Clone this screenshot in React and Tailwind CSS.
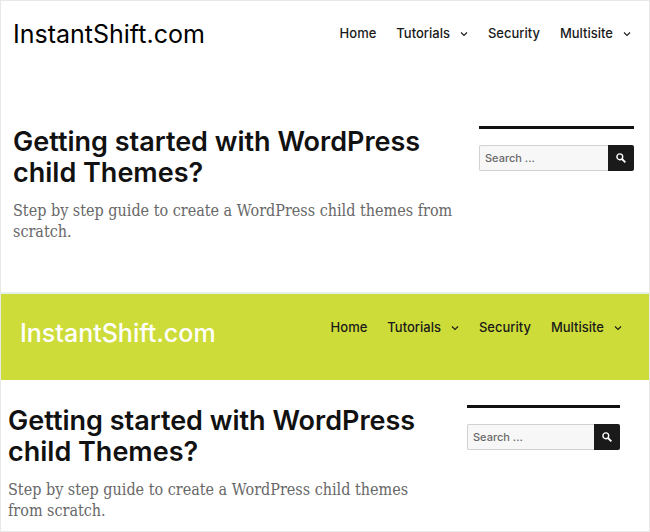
const navItems = [
    { label: 'Home' },
    { label: 'Tutorials', hasMenu: true },
    { label: 'Security' },
    { label: 'Multisite', hasMenu: true },
];

function ChevronIcon() {
    return (
        <svg className="w-[8px] h-[6px] ml-2.5 mt-px" viewBox="0 0 8 6" fill="none" stroke="currentColor" strokeWidth="1.1" aria-hidden="true">
            <path d="M1 1.5 4 4.5 7 1.5" />
        </svg>
    );
}

function SearchIcon() {
    return (
        <svg className="w-[10px] h-[10px]" viewBox="0 0 10 10" fill="none" stroke="currentColor" aria-hidden="true">
            <circle cx="3.8" cy="3.8" r="2.9" strokeWidth="1.4" />
            <path d="M6 6 9.4 9.4" strokeWidth="1.8" />
        </svg>
    );
}

function MainNav() {
    return (
        <nav>
            <ul className="flex gap-5 text-[13px] leading-4 font-medium text-[#1a1a1a]">
                {navItems.map((item) => (
                    <li key={item.label}>
                        <a href="#" className="flex items-center">
                            {item.label}
                            {item.hasMenu && <ChevronIcon />}
                        </a>
                    </li>
                ))}
            </ul>
        </nav>
    );
}

function SearchForm() {
    return (
        <form role="search" onSubmit={(e) => e.preventDefault()} className="flex h-[26px] mt-4">
            <input
                type="text"
                aria-label="Search"
                placeholder="Search ..."
                className="flex-1 min-w-0 px-[5px] text-[11px] leading-4 font-medium bg-[#f7f7f7] border border-r-0 border-[#d1d1d1] rounded-l-xs placeholder:text-[#686868]"
            />
            <button type="submit" aria-label="Search" className="w-[26px] flex items-center justify-center bg-[#1a1a1a] text-white rounded-r-xs">
                <SearchIcon />
            </button>
        </form>
    );
}

function Article() {
    return (
        <article className="flex-1 min-w-0">
            <h1 className="text-[27px] leading-[31px] font-semibold text-[#111111]">
                Getting started with WordPress child Themes?
            </h1>
            <p className="mt-3 font-['DejaVu_Serif_Condensed','DejaVu_Serif',serif] text-base leading-[21px] text-[#686868]">
                Step by step guide to create a WordPress child themes from scratch.
            </p>
        </article>
    );
}

export default function App() {
    return (
        <div className="min-h-screen bg-white border border-[#e8e8e8] font-['Inter',sans-serif]">
            <section>
                <header className="flex items-start justify-between pt-[19px] pl-3 pr-[18px]">
                    <a href="#" className="text-[25px] leading-7 text-black">InstantShift.com</a>
                    <div className="pt-[5px]">
                        <MainNav />
                    </div>
                </header>
                <main className="flex items-start gap-5 pt-[78px] pb-[50px] pl-3 pr-[15px]">
                    <Article />
                    <aside className="w-[155px] border-t-3 border-[#111111]">
                        <SearchForm />
                    </aside>
                </main>
            </section>

            <section>
                <header className="flex items-start justify-between h-[88px] pt-[25px] pl-[19px] pr-[27px] bg-[#cddc39] border-t-2 border-[#e6f1ee]">
                    <a href="#" className="text-[25px] leading-7 font-medium text-white">InstantShift.com</a>
                    <MainNav />
                </header>
                <main className="flex items-start gap-12 pt-[25px] pl-[7px] pr-[29px]">
                    <Article />
                    <aside className="w-[153px] border-t-3 border-[#111111]">
                        <SearchForm />
                    </aside>
                </main>
            </section>
        </div>
    );
}
